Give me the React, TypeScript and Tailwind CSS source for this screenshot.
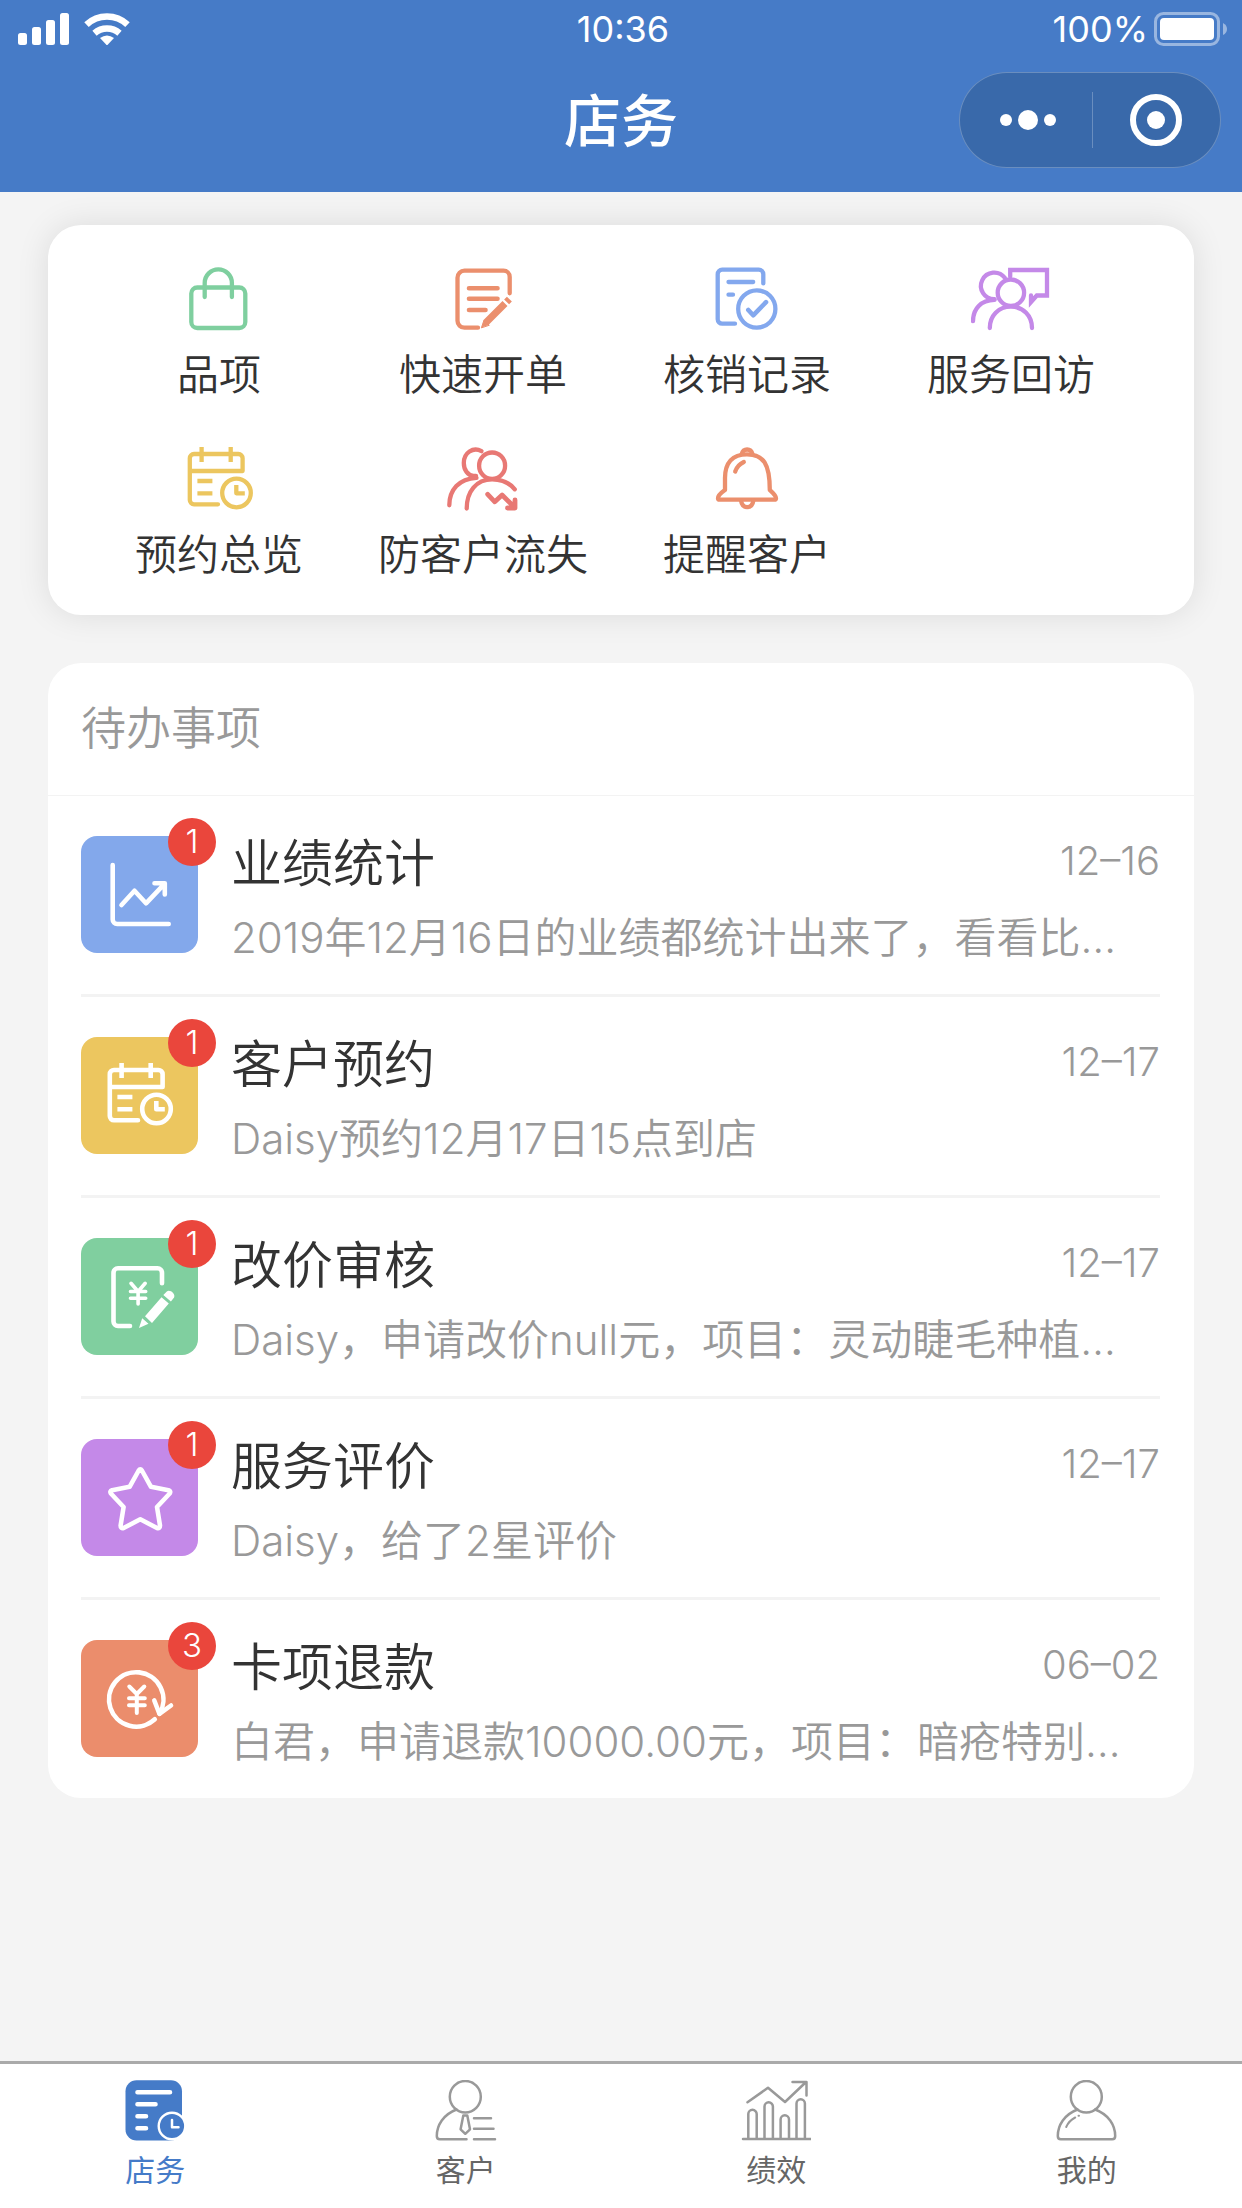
import type { ReactNode } from "react";

type Shortcut = { label: string; color: string; icon: ReactNode };

type Task = {
  title: string;
  desc: string;
  date: string;
  count: number;
  color: string;
  icon: ReactNode;
};

const calendar = (
  <>
    <path d="M39 59.3H15a4.2 4.2 0 0 1-4.2-4.2V13.2A4.2 4.2 0 0 1 15 9h44.4a4.2 4.2 0 0 1 4.2 4.2V26H11" />
    <path d="M22.6 2v15M51.7 2v15M18.4 36h15M18.4 48.3h15" strokeLinecap="butt" />
    <circle cx="57.5" cy="48" r="14.3" />
    <path d="M57.3 40v8.3h8.5" strokeLinecap="butt" />
  </>
);

const shortcuts: Shortcut[] = [
  {
    label: "品项",
    color: "text-[#7fcf9f]",
    icon: (
      <>
        <rect x="12.3" y="22.5" width="54" height="40.5" rx="6" />
        <path d="M25.7 32V18a13.6 13.6 0 0 1 27.2 0V32" />
      </>
    ),
  },
  {
    label: "快速开单",
    color: "text-[#eb8f6d]",
    icon: (
      <>
        <path d="M35 62.7H21.5a7 7 0 0 1-7-7v-43a7 7 0 0 1 7-7h39a6.2 6.2 0 0 1 6.2 6.2v16.4" />
        <path d="M26 23.3h28.5M26 33.7h28.5M26 45h16.5" strokeWidth="4.6" />
        <path d="M43 57.5 62 38.5M63.6 36.9l2.8-2.8" strokeWidth="7" strokeLinecap="butt" />
        <path d="M38.5 62.500l2.5-7.500 5 5z" fill="currentColor" strokeWidth="1" />
      </>
    ),
  },
  {
    label: "核销记录",
    color: "text-[#83a8ee]",
    icon: (
      <>
        <path d="M28 58.7H15.2a4.5 4.5 0 0 1-4.5-4.5v-45a4.5 4.5 0 0 1 4.5-4.5h36.6a4.5 4.5 0 0 1 4.5 4.5v9.2" />
        <path d="M21.5 17h24.7M21.5 29.7h4.5" />
        <circle cx="49.8" cy="44" r="18.6" />
        <path d="m41.3 45 4.9 5.3L59 37.2" strokeWidth="4.6" />
      </>
    ),
  },
  {
    label: "服务回访",
    color: "text-[#c489e8]",
    icon: (
      <>
        <path d="M23.5 34.2a13.3 13.3 0 1 1 10.3-21.4" />
        <path d="M2 56.2c0-12.6 8-21 21.5-21.3" />
        <circle cx="39.9" cy="27.7" r="13.2" />
        <path d="M18.8 63c0-12.5 8.7-21.3 21.1-21.3S61 50.5 61 63" />
        <path d="M39.2 11.5V5H76v25.5H65.8L60 37v-6.5" strokeLinejoin="miter" />
      </>
    ),
  },
  { label: "预约总览", color: "text-[#ecc65f]", icon: calendar },
  {
    label: "防客户流失",
    color: "text-[#e87874]",
    icon: (
      <>
        <path d="M38.5 6.2C30 1.5 20.8 8 20.8 18c0 7 4 12.5 9.7 12.8h2.5" />
        <path d="M6.3 60.3C6.3 45 16 33.5 33.5 32.8" />
        <ellipse cx="49.1" cy="20.7" rx="13" ry="13.2" />
        <path d="M23.7 63.5c0-17 9.5-29.2 25.4-29.2 9.5 0 17.5 3.7 22.7 10" />
        <path d="m44.7 49.3 7.1 7.5 7.3-6.8 11.5 11.3M72 55v8h-7.5" strokeWidth="4.8" />
      </>
    ),
  },
  {
    label: "提醒客户",
    color: "text-[#eb8f6d]",
    icon: (
      <>
        <path d="M40 9.3C25.5 9.3 18 17.5 18 33v12c-2.5 1.8-7 5-7 8.2 0 1 .7 1.5 1.7 1.5h54.6c1 0 1.7-.5 1.7-1.5 0-3.2-4.5-6.4-6.2-8.2C62.8 19 56.5 9.3 40 9.3z" />
        <path d="M34.7 9c.8-2.9 2.7-4.5 5.4-4.5s4.6 1.6 5.4 4.5M34 55.5c.6 4.5 2.8 6.7 6.2 6.7s5.6-2.2 6.2-6.7M28.2 26.5c1.6-4.6 4.5-7.6 8.6-9.5" />
      </>
    ),
  },
];

const tasks: Task[] = [
  {
    title: "业绩统计",
    desc: "2019年12月16日的业绩都统计出来了，看看比…",
    date: "12–16",
    count: 1,
    color: "bg-[#83a8eb]",
    icon: (
      <>
        <path d="M31.7 29v54.5a4.5 4.5 0 0 0 4.5 4.5h51.5" />
        <path d="m40.5 69 13-14.3L65 67.3l18.5-19.5M73.5 47.3h10.3V58.5" />
      </>
    ),
  },
  {
    title: "客户预约",
    desc: "Daisy预约12月17日15点到店",
    date: "12–17",
    count: 1,
    color: "bg-[#ecc65f]",
    icon: <g transform="translate(18 24)">{calendar}</g>,
  },
  {
    title: "改价审核",
    desc: "Daisy，申请改价null元，项目：灵动睫毛种植…",
    date: "12–17",
    count: 1,
    color: "bg-[#80cf9f]",
    icon: (
      <>
        <path d="M49 88H37a4.5 4.5 0 0 1-4.5-4.5V34.8a4.5 4.5 0 0 1 4.5-4.5h39.5a4.5 4.5 0 0 1 4.5 4.5v10.5" />
        <path d="m50 45.3 7.1 8.2 7.1-8.2M57.1 53.5V66M49.5 53.5h15.2M49.5 60.3h15.2" strokeWidth="3.6" />
        <path
          d="m64 78.3 16.5-19 7.3 6.2-16.8 19.5zM58 90l3.2-9.8 6.3 5.5zM82.3 57l3.5-3.6c3-2.3 9 2.3 7.3 6l-3.2 4z"
          fill="white"
          stroke="none"
        />
      </>
    ),
  },
  {
    title: "服务评价",
    desc: "Daisy，给了2星评价",
    date: "12–17",
    count: 1,
    color: "bg-[#c489e8]",
    icon: (
      <path d="M57.7 31.5q1.6-2.5 3.2 0L70 47.8l17.5 3.4q2.7.9 1.2 3.3L76 68l3 18.5q0 3.3-3 2.5L59.3 80.3 42.6 89q-3 .8-3-2.5L42.6 68 29.9 54.5q-1.5-2.4 1.2-3.3l17.5-3.4z" />
    ),
  },
  {
    title: "卡项退款",
    desc: "白君，申请退款10000.00元，项目：暗疮特别…",
    date: "06–02",
    count: 3,
    color: "bg-[#eb8d6c]",
    icon: (
      <>
        <path d="M78.5 73.5A27.2 27.2 0 1 0 73.8 79.3" />
        <path d="m73.3 60.5 5.1 13.3L90 65.5" />
        <path d="m48.3 46.5 7.5 7.5 7.5-7.5M55.8 54v19M48 58.3h15.8M48 65.3h15.8" strokeWidth="4" />
      </>
    ),
  },
];

const tabs = [
  {
    label: "店务",
    active: true,
    icon: (
      <>
        <rect x="5.5" y="0.3" width="56.5" height="60.2" rx="11" fill="currentColor" stroke="none" />
        <path d="M17.5 12.3h32.5M17.5 24.3h18M17.5 36.3h8.5M17.5 48.3h8.5" stroke="white" strokeWidth="4.6" />
        <circle cx="52" cy="46" r="13.3" fill="currentColor" stroke="white" strokeWidth="2.4" />
        <path d="M52 40v7.3h6.5" stroke="white" />
      </>
    ),
  },
  {
    label: "客户",
    active: false,
    icon: (
      <>
        <ellipse cx="34.3" cy="16.7" rx="15.5" ry="15.7" />
        <path d="M25.5 29.5C12.5 34.5 5.8 45 5.8 56c0 2 1 3.3 3 3.3h26.7" />
        <path d="M32.3 35.5h4l2.7 13.8-4.7 4.5-4.7-4.5zM43 38.3h17M43 48.7h19.5M43 59.3h21" />
      </>
    ),
  },
  {
    label: "绩效",
    active: false,
    icon: (
      <>
        <path d="M2 59h67.5M7.3 58V34a4.2 4.2 0 0 1 8.4 0v24M23.5 58V26.5a4.2 4.2 0 0 1 8.4 0V58M39.6 58V39.5a4.2 4.2 0 0 1 8.4 0V58M55.5 58V23.5a4.2 4.2 0 0 1 8.4 0V58" />
        <path d="M6.5 22.3 27 7.8l17 14.2L64.5 2.5M51.5 2h14v13.5" />
      </>
    ),
  },
  {
    label: "我的",
    active: false,
    icon: (
      <>
        <ellipse cx="34.3" cy="16.7" rx="15.5" ry="15.7" />
        <path d="M25.5 29.5C12.5 34.5 5.8 45 5.8 56c0 2 1 3.3 3 3.3h51.4c2 0 3-1.3 3-3.3 0-11-6.7-21.5-20-26.5" />
        <path d="M14.2 47c1.8-4.2 4.7-7.3 9-9.5M26.5 35.8h.5" strokeWidth="2" />
      </>
    ),
  },
];

function StatusBar() {
  return (
    <div className="grid h-[58px] grid-cols-3 items-center pr-3.5 pl-[18px] text-4xl text-white">
      <svg className="h-8 w-28" viewBox="0 0 112 32" fill="white">
        <rect y="20" width="9" height="12" rx="2.5" />
        <rect x="14" y="14" width="9" height="18" rx="2.5" />
        <rect x="28" y="7" width="9" height="25" rx="2.5" />
        <rect x="42" width="9" height="32" rx="2.5" />
        <g fill="none" stroke="white" strokeWidth="6.5">
          <path d="M68.5 11.7a30 30 0 0 1 41 0" />
          <path d="M76.5 20.3a19 19 0 0 1 25 0" />
        </g>
        <path d="M89 32.5l-7-7.5q7-5 14 0z" />
      </svg>
      <span className="text-center">10:36</span>
      <div className="flex items-center justify-end gap-1.5">
        <span>100%</span>
        <svg className="h-[34px] w-[74px]" viewBox="0 0 74 34">
          <rect x="1.5" y="1.5" width="63" height="31" rx="8" fill="none" stroke="white" strokeWidth="3" opacity="0.45" />
          <rect x="6" y="6" width="54" height="22" rx="4" fill="white" />
          <path d="M69 11q4 2 4 6t-4 6z" fill="white" opacity="0.45" />
        </svg>
      </div>
    </div>
  );
}

function TitleBar() {
  return (
    <div className="relative flex h-[134px] items-center justify-center pb-2">
      <h1 className="text-[57px] leading-none font-medium text-white">店务</h1>
      <div className="absolute top-3.5 right-[21px] flex h-24 w-[262px] items-center rounded-full border border-white/25 bg-[#3969aa]">
        <button aria-label="更多" className="flex flex-1 items-center justify-center gap-1.5 pl-1">
          <span className="size-3 rounded-full bg-white" />
          <span className="size-5 rounded-full bg-white" />
          <span className="size-3 rounded-full bg-white" />
        </button>
        <span className="h-14 w-px bg-white/25" />
        <button aria-label="关闭" className="flex flex-1 justify-center">
          <span className="flex size-[52px] items-center justify-center rounded-full border-6 border-white">
            <span className="size-[18px] rounded-full bg-white" />
          </span>
        </button>
      </div>
    </div>
  );
}

function ShortcutCard() {
  return (
    <section className="grid grid-cols-4 rounded-[33px] bg-white py-[15px] pr-[51px] pl-[39px] shadow-[0_0_33px_rgba(0,0,0,0.1)]">
      {shortcuts.map((item) => (
        <button key={item.label} className="flex h-[180px] flex-col items-center pt-[25px]">
          <svg
            className={`h-[66px] w-20 ${item.color}`}
            viewBox="0 0 80 66"
            fill="none"
            stroke="currentColor"
            strokeWidth="4.3"
            strokeLinecap="round"
            strokeLinejoin="round"
          >
            {item.icon}
          </svg>
          <span className="mt-3.5 text-[42px] leading-[60px] font-[350] whitespace-nowrap">{item.label}</span>
        </button>
      ))}
    </section>
  );
}

function TaskRow({ task }: { task: Task }) {
  return (
    <li className="border-b-3 border-[#f3f3f3] last:border-b-0">
      <a href="#" className="flex gap-[33px] pt-10 pb-5">
        <div className={`relative size-[117px] shrink-0 rounded-2xl ${task.color}`}>
          <svg
            viewBox="0 0 117 117"
            fill="none"
            stroke="white"
            strokeWidth="4.6"
            strokeLinecap="round"
            strokeLinejoin="round"
          >
            {task.icon}
          </svg>
          <span className="absolute -top-[18px] -right-[18px] flex size-12 items-center justify-center rounded-full bg-[#ea463c] text-[33px] font-light text-white">
            {task.count}
          </span>
        </div>
        <div className="-mt-2.5 min-w-0 flex-1">
          <div className="flex items-start justify-between">
            <h3 className="text-[51px] leading-[76px] font-[350]">{task.title}</h3>
            <time className="text-[40px] leading-[70px] font-[350] text-[#999]">{task.date}</time>
          </div>
          <p className="truncate text-[42px] leading-[72px] font-[350] text-[#999]">{task.desc}</p>
        </div>
      </a>
    </li>
  );
}

export default function App() {
  return (
    <div className="flex min-h-screen flex-col bg-[#f4f4f4] font-['Inter','Noto_Sans_CJK_SC',sans-serif] text-[#333]">
      <header className="bg-[#467bc7]">
        <StatusBar />
        <TitleBar />
      </header>

      <main className="flex flex-1 flex-col gap-12 px-12 py-[33px]">
        <ShortcutCard />
        <section className="rounded-[33px] bg-white">
          <h2 className="border-b border-[#f3f3f3] px-[33px] py-8 text-[45px] leading-[68px] font-[350] text-[#999]">
            待办事项
          </h2>
          <ul className="pr-[34px] pl-[33px]">
            {tasks.map((task) => (
              <TaskRow key={task.title} task={task} />
            ))}
          </ul>
        </section>
      </main>

      <nav className="grid h-[147px] grid-cols-4 border-t-3 border-[#aaa] bg-white">
        {tabs.map((tab) => (
          <a key={tab.label} href="#" className="flex flex-col items-center pt-4">
            <svg
              className={`h-[62px] w-[70px] ${tab.active ? "text-[#457bc8]" : "text-[#999]"}`}
              viewBox="0 0 70 62"
              fill="none"
              stroke="currentColor"
              strokeWidth="2.5"
              strokeLinecap="round"
              strokeLinejoin="round"
            >
              {tab.icon}
            </svg>
            <span className={`mt-2 text-[30px] leading-10 ${tab.active ? "text-[#457bc8]" : "text-[#666]"}`}>
              {tab.label}
            </span>
          </a>
        ))}
      </nav>
    </div>
  );
}
